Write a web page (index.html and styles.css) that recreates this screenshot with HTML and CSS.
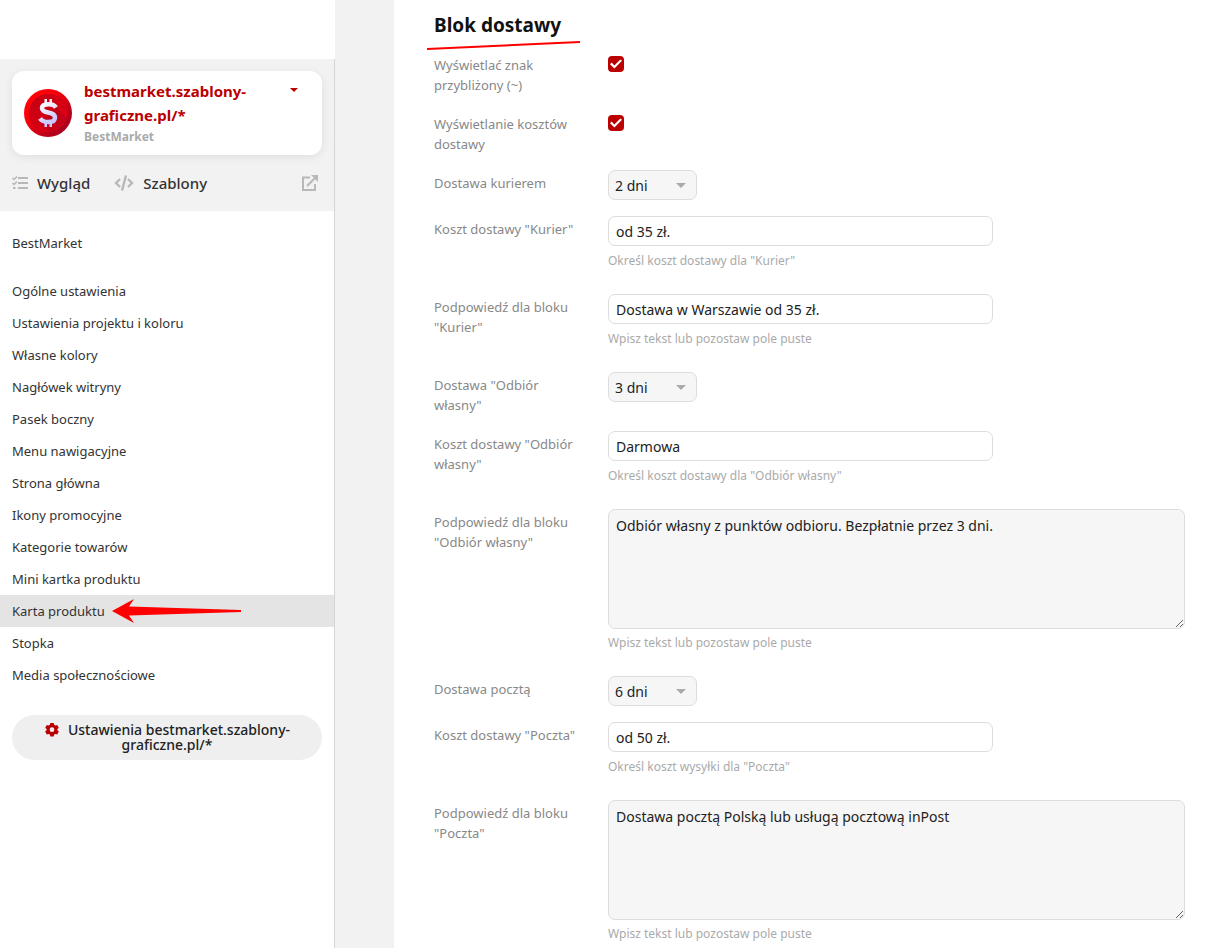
FILE: index.html
```html
<!DOCTYPE html>
<html lang="pl">
<head>
<meta charset="utf-8">
<title>Karta produktu</title>
<link rel="stylesheet" href="styles.css">
</head>
<body>
<div class="page">
  <aside class="sidebar">
    <div class="sidebar-top"></div>
    <div class="sidebar-body">
      <header class="site-head">
        <button class="site-card" type="button">
          <svg class="site-logo" viewBox="0 0 48 48" aria-hidden="true">
            <defs>
              <linearGradient id="rim" x1="0" y1="0" x2="1" y2="1"><stop offset="0.3" stop-color="#ff0008"/><stop offset="0.85" stop-color="#a8001e"/></linearGradient>
              <linearGradient id="face" x1="0" y1="0" x2="1" y2="1"><stop offset="0" stop-color="#c00014"/><stop offset="1" stop-color="#e60012"/></linearGradient>
              <linearGradient id="sign" x1="0" y1="0" x2="0.5" y2="1"><stop offset="0" stop-color="#ffffff"/><stop offset="1" stop-color="#c9c9ff"/></linearGradient>
            </defs>
            <circle cx="24" cy="24" r="24" fill="url(#rim)"/>
            <circle cx="24" cy="24" r="19" fill="url(#face)"/>
            <path d="M17 34 25 43Q38 41 42 29L32 18Z" fill="#b0001c" opacity=".6"/>
            <path d="M20.500 10h2.500v4h2.500V10H28v4.500h-7.500zM20.500 33.500H28V38h-2.500v-4H23v4h-2.500z" fill="url(#sign)"/>
            <path d="M32 18.500Q30 15.300 24.500 15.300Q18 15.300 18 19.300Q18 22.300 24 23.500Q31 24.800 31 28.500Q31 33 24.500 33Q18.500 33 16 29.500" fill="none" stroke="url(#sign)" stroke-width="4.500"/>
          </svg>
          <span class="site-text">
            <span class="site-name">bestmarket.szablony-<br>graficzne.pl/*</span>
            <span class="site-sub">BestMarket</span>
          </span>
          <span class="caret"></span>
        </button>
        <nav class="tabs">
          <a class="tab" href="#">
            <svg class="icon-list" viewBox="0 0 16 14" aria-hidden="true"><path d="M6 2h10M6 7h10M6 12h10" stroke="#b8b8b8" stroke-width="2"/><path d="M.5 2l1.500 1.500L5 .5M.5 7l1.500 1.500L5 5.500" fill="none" stroke="#b8b8b8" stroke-width="1.500"/><path d="M1 11h2.500v2H1z" fill="#b8b8b8"/></svg>
            Wygląd</a>
          <a class="tab" href="#">
            <svg class="icon-code" viewBox="0 0 20 16" aria-hidden="true"><path d="M6 4 2 8l4 4M14 4l4 4-4 4M12 .5 8 15.500" fill="none" stroke="#b8b8b8" stroke-width="2.400"/></svg>
            Szablony</a>
          <a class="tab tab-end" href="#" aria-label="Otwórz witrynę">
            <svg class="icon-open" viewBox="0 0 16 16" aria-hidden="true"><path d="M8 2.500H1V15h12V9" fill="none" stroke="#b8b8b8" stroke-width="2"/><path d="M5 11 13 3" stroke="#b8b8b8" stroke-width="2.200"/><path d="M9 0h7v7z" fill="#b8b8b8"/></svg>
          </a>
        </nav>
      </header>
      <nav class="menu">
        <a class="item item-root" href="#">BestMarket</a>
        <a class="item" href="#">Ogólne ustawienia</a>
        <a class="item" href="#">Ustawienia projektu i koloru</a>
        <a class="item" href="#">Własne kolory</a>
        <a class="item" href="#">Nagłówek witryny</a>
        <a class="item" href="#">Pasek boczny</a>
        <a class="item" href="#">Menu nawigacyjne</a>
        <a class="item" href="#">Strona główna</a>
        <a class="item" href="#">Ikony promocyjne</a>
        <a class="item" href="#">Kategorie towarów</a>
        <a class="item" href="#">Mini kartka produktu</a>
        <a class="item item-active" href="#">Karta produktu<svg class="arrow" viewBox="0 0 130 24" aria-hidden="true"><path d="M0 12 22 0l-5 7.500L129 11v2L17 16.500 22 24z" fill="#f00"/></svg></a>
        <a class="item" href="#">Stopka</a>
        <a class="item" href="#">Media społecznościowe</a>
      </nav>
      <button class="settings" type="button"><svg class="icon-gear" viewBox="0 0 16 16" aria-hidden="true"><path fill="#b00" fill-rule="evenodd" d="M6.200 1h3.600l.5 2 1.200.7 2-.6 1.800 3.100L13.800 7.500v1.400l1.500 1.300-1.800 3.100-2-.6-1.200.7-.5 2H6.200l-.5-2-1.200-.7-2 .6L.7 10.200l1.500-1.300V7.500L.7 6.200l1.800-3.100 2 .6L5.700 3zM8 5.700a2.500 2.500 0 1 0 0 5 2.500 2.500 0 0 0 0-5z"/></svg>Ustawienia bestmarket.szablony-<br>graficzne.pl/*</button>
    </div>
  </aside>
  <main class="content">
    <h2 class="title">Blok dostawy<svg class="underline" viewBox="0 0 154 9" aria-hidden="true"><path d="M0 8 153 1" stroke="#f00" stroke-width="2"/></svg></h2>
    <form class="form">
      <div class="row"><label class="label" for="approx">Wyświetlać znak przybliżony (~)</label><div class="field"><input class="check" id="approx" type="checkbox" checked></div></div>
      <div class="row"><label class="label" for="costs">Wyświetlanie kosztów dostawy</label><div class="field"><input class="check" id="costs" type="checkbox" checked></div></div>
      <div class="row"><label class="label" for="courier">Dostawa kurierem</label><div class="field"><span class="pick"><select class="select" id="courier"><option>2 dni</option></select></span></div></div>
      <div class="row"><label class="label" for="courier-cost">Koszt dostawy "Kurier"</label><div class="field"><input class="text" id="courier-cost" type="text" value="od 35 zł."><p class="hint">Określ koszt dostawy dla "Kurier"</p></div></div>
      <div class="row"><label class="label" for="courier-tip">Podpowiedź dla bloku "Kurier"</label><div class="field"><input class="text" id="courier-tip" type="text" value="Dostawa w Warszawie od 35 zł."><p class="hint">Wpisz tekst lub pozostaw pole puste</p></div></div>
      <div class="row"><label class="label" for="pickup">Dostawa "Odbiór własny"</label><div class="field"><span class="pick"><select class="select" id="pickup"><option>3 dni</option></select></span></div></div>
      <div class="row"><label class="label" for="pickup-cost">Koszt dostawy "Odbiór własny"</label><div class="field"><input class="text" id="pickup-cost" type="text" value="Darmowa"><p class="hint">Określ koszt dostawy dla "Odbiór własny"</p></div></div>
      <div class="row"><label class="label" for="pickup-tip">Podpowiedź dla bloku "Odbiór własny"</label><div class="field"><textarea class="area" id="pickup-tip">Odbiór własny z punktów odbioru. Bezpłatnie przez 3 dni.</textarea><p class="hint">Wpisz tekst lub pozostaw pole puste</p></div></div>
      <div class="row"><label class="label" for="post">Dostawa pocztą</label><div class="field"><span class="pick"><select class="select" id="post"><option>6 dni</option></select></span></div></div>
      <div class="row"><label class="label" for="post-cost">Koszt dostawy "Poczta"</label><div class="field"><input class="text" id="post-cost" type="text" value="od 50 zł."><p class="hint">Określ koszt wysyłki dla "Poczta"</p></div></div>
      <div class="row"><label class="label" for="post-tip">Podpowiedź dla bloku "Poczta"</label><div class="field"><textarea class="area" id="post-tip">Dostawa pocztą Polską lub usługą pocztową inPost</textarea><p class="hint">Wpisz tekst lub pozostaw pole puste</p></div></div>
    </form>
  </main>
</div>
</body>
</html>
```
FILE: styles.css
```css
* { box-sizing: border-box; }
body {
  margin: 0;
  background: #fff;
  color: #333;
  font: 13px/20px "Segoe UI", "Noto Sans", "Open Sans", sans-serif;
}
button, input, select, textarea { font-family: inherit; color: #222; }
a { color: inherit; text-decoration: none; }

.page { display: flex; min-height: 100vh; background: #f2f2f2; }

.sidebar { flex: 0 0 335px; display: flex; flex-direction: column; background: #fff; }
.sidebar-top { height: 59px; }
.sidebar-body { flex: 1; border-right: 1px solid #d5d5d5; }
.site-head { background: #f2f2f2; padding: 12px 12px 0; }
.site-card {
  display: flex;
  width: 100%;
  padding: 8px 24px 8px 12px;
  border: 0;
  border-radius: 12px;
  background: #fff;
  box-shadow: 0 2px 10px rgba(0, 0, 0, .08);
  text-align: left;
}
.site-logo { width: 48px; height: 48px; align-self: center; margin-right: 12px; }
.site-text { flex: 1; }
.site-name { display: block; color: #b00; font-size: 15px; font-weight: 700; line-height: 24px; }
.site-sub { display: block; color: #aaa; font-size: 12px; font-weight: 700; line-height: 20px; }
.caret {
  width: 8px;
  height: 4px;
  margin-top: 9px;
  background: #b00;
  clip-path: polygon(0 0, 100% 0, 50% 100%);
}
.tabs { display: flex; align-items: center; gap: 24px; height: 56px; }
.tab { display: flex; align-items: center; gap: 9px; font-size: 15px; font-weight: 500; }
.tab-end { margin: 0 4px 0 auto; }
.icon-list { width: 16px; height: 14px; }
.icon-code { width: 20px; height: 16px; }
.icon-open { width: 16px; height: 16px; }

.menu { display: flex; flex-direction: column; padding: 16px 0 24px; }
.item { display: flex; align-items: center; height: 32px; padding: 0 12px; }
.item-root { margin-bottom: 16px; }
.item-active { position: relative; background: #e4e4e4; }
.arrow { position: absolute; left: 112px; top: 4px; width: 130px; height: 24px; }
.settings {
  display: block;
  width: calc(100% - 24px);
  margin: 0 12px;
  padding: 7px 24px 8px;
  border: 0;
  border-radius: 24px;
  background: #efefef;
  font-size: 14px;
  font-weight: 500;
  line-height: 15px;
}
.icon-gear { width: 16px; height: 15px; margin-right: 8px; vertical-align: -2px; }

.content { flex: 1; min-width: 0; margin-left: 59px; padding: 9px 23px 0 40px; background: #fff; }
.title {
  position: relative;
  margin: 0 0 11px;
  color: #111;
  font-size: 19px;
  font-weight: 700;
  line-height: 32px;
}
.underline { position: absolute; left: -7px; top: 32px; width: 154px; height: 9px; }
.form { display: flex; flex-direction: column; gap: 16px; }
.row { display: grid; grid-template-columns: 150px 1fr; column-gap: 24px; }
.label { padding-top: 3px; color: #888; }
.field { display: flex; flex-direction: column; align-items: flex-start; }
.check {
  display: grid;
  place-items: center;
  width: 16px;
  height: 16px;
  margin: 4px 0 0;
  appearance: none;
  border-radius: 4px;
  background: #b00;
}
.check:checked::before {
  content: "";
  width: 12px;
  height: 10px;
  background: #fff;
  clip-path: polygon(0 52%, 14% 36%, 36% 64%, 86% 4%, 100% 18%, 37% 94%);
}
.pick { position: relative; }
.pick::after {
  content: "";
  position: absolute;
  right: 11px;
  top: 13px;
  width: 10px;
  height: 5px;
  background: #aaa;
  clip-path: polygon(0 0, 100% 0, 50% 100%);
  pointer-events: none;
}
.select {
  display: block;
  width: 89px;
  height: 30px;
  padding: 0 6px;
  appearance: none;
  border: 1px solid #ddd;
  border-radius: 7px;
  background: #f6f6f6;
  font-size: 14px;
}
.text {
  width: 385px;
  max-width: 100%;
  height: 30px;
  padding: 0 7px;
  border: 1px solid #ddd;
  border-radius: 7px;
  background: #fff;
  font-size: 14px;
}
.area {
  display: block;
  width: 100%;
  height: 120px;
  padding: 6px 7px;
  border: 1px solid #ddd;
  border-radius: 7px;
  background: #f6f6f6;
  font-size: 14px;
  line-height: 20px;
}
.hint { margin: 5px 0 7px; color: #aaa; font-size: 12px; line-height: 20px; }
.area + .hint { margin-top: 4px; }
.row:last-child .hint { margin-bottom: 0; }
```
